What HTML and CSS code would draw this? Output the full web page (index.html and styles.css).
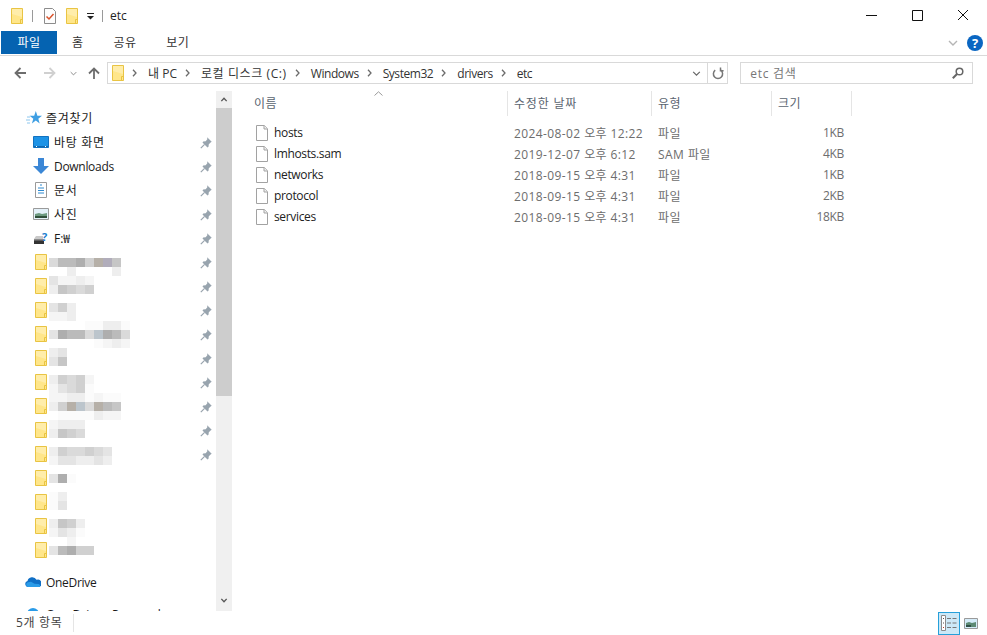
FILE: index.html
```html
<!DOCTYPE html>
<html lang="ko">
<head>
    <meta charset="UTF-8">
    <meta name="viewport" content="width=device-width, initial-scale=1.0">
    <title>etc</title>
    <link rel="stylesheet" href="styles.css">
</head>
<body>
    <svg class="defs" width="0" height="0">
        <symbol id="folder" viewBox="0 0 12 16">
            <path d="M.5.5h11v15H.5z" fill="#ffe68a" stroke="#e9c443"/>
            <path d="M1 1h10v8L1 6z" fill="#ffedaa"/>
            <path d="M9.5 15.5v-4h2" fill="none" stroke="#e9c443"/>
        </symbol>
        <symbol id="pin" viewBox="0 0 12 12">
            <path d="M7.2.3 11.700 4.800l-1.100.6-1.800 1.800-.3 2.600-1 .7L2.500 5.500l.7-1 2.500-.3 1.600-1.900z" fill="#98a4ae"/>
            <path d="M4.600 7.400 .8 11.200" stroke="#98a4ae" stroke-width="1.200" fill="none"/>
        </symbol>
        <symbol id="file" viewBox="0 0 12 16">
            <path d="M.5.5h7.800l3.200 3.200v11.800H.5z" fill="#fff" stroke="#a2a2a2"/>
            <path d="M8 .5v3.500h3.500" fill="#f0f0f0" stroke="#a2a2a2"/>
        </symbol>
        <symbol id="chev-down" viewBox="0 0 10 6">
            <path d="M1 1l4 4 4-4" fill="none" stroke="currentColor" stroke-width="1.400"/>
        </symbol>
        <symbol id="sep-arrow" viewBox="0 0 5 8">
            <path d="M1 .8 4 4 1 7.200" fill="none" stroke="#6b6b6b" stroke-width="1.300"/>
        </symbol>
    </svg>

    <header class="titlebar">
        <svg class="qa-icon"><use href="#folder"/></svg>
        <span class="qa-sep"></span>
        <svg class="qa-check" viewBox="0 0 12 16">
            <path d="M.5.5h8l3 3v12H.5z" fill="#fdfdfd" stroke="#8c8c8c"/>
            <path d="M2.500 8.500 5 11l4.500-5" fill="none" stroke="#d9532c" stroke-width="1.500"/>
        </svg>
        <svg class="qa-icon qa-second"><use href="#folder"/></svg>
        <svg class="qa-drop" viewBox="0 0 7 7">
            <path d="M0 .5h7" stroke="#222"/>
            <path d="M0 3h7L3.500 6.500z" fill="#222"/>
        </svg>
        <span class="qa-sep qa-sep-last"></span>
        <span class="title-text">etc</span>
        <div class="window-buttons">
            <svg class="win-btn" viewBox="0 0 46 16"><path d="M18 8.500h11" stroke="#111"/></svg>
            <svg class="win-btn" viewBox="0 0 46 16"><path d="M18.500 3.500h10v10h-10z" fill="none" stroke="#111"/></svg>
            <svg class="win-btn" viewBox="0 0 46 16"><path d="M18 3l10 10M28 3 18 13" fill="none" stroke="#111"/></svg>
        </div>
    </header>

    <nav class="ribbon">
        <span class="tab tab-file">파일</span>
        <span class="tab tab-home">홈</span>
        <span class="tab tab-share">공유</span>
        <span class="tab tab-view">보기</span>
        <svg class="ribbon-toggle"><use href="#chev-down"/></svg>
        <span class="help">?</span>
    </nav>

    <div class="address-row">
        <svg class="nav-arrow" viewBox="0 0 12 12"><path d="M12 6H2M6.500 1 1.500 6l5 5" fill="none" stroke="#6d6d6d" stroke-width="1.800"/></svg>
        <svg class="nav-arrow nav-forward" viewBox="0 0 12 12"><path d="M0 6h10M5.500 1l5 5-5 5" fill="none" stroke="#d0d0d0" stroke-width="1.800"/></svg>
        <svg class="recent"><use href="#chev-down"/></svg>
        <svg class="nav-arrow nav-up" viewBox="0 0 12 12"><path d="M6 12V2M1 6.500l5-5 5 5" fill="none" stroke="#6d6d6d" stroke-width="1.800"/></svg>
        <div class="address-box">
            <svg class="crumb-folder"><use href="#folder"/></svg>
            <svg class="crumb-sep"><use href="#sep-arrow"/></svg>
            <span class="crumb">내 PC</span>
            <svg class="crumb-sep"><use href="#sep-arrow"/></svg>
            <span class="crumb crumb-ko">로컬 디스크 (C:)</span>
            <svg class="crumb-sep"><use href="#sep-arrow"/></svg>
            <span class="crumb crumb-lat">Windows</span>
            <svg class="crumb-sep"><use href="#sep-arrow"/></svg>
            <span class="crumb crumb-lat">System32</span>
            <svg class="crumb-sep"><use href="#sep-arrow"/></svg>
            <span class="crumb crumb-lat">drivers</span>
            <svg class="crumb-sep"><use href="#sep-arrow"/></svg>
            <span class="crumb crumb-lat">etc</span>
            <svg class="address-drop"><use href="#chev-down"/></svg>
            <span class="refresh">
                <svg viewBox="0 0 12 13" width="12" height="13"><path d="M8.800 3.200a4.600 4.600 0 1 1-5.600 0M3.500 .5v3.300H.4" fill="none" stroke="#777" stroke-width="1.500" transform="translate(12 0) scale(-1 1)"/></svg>
            </span>
        </div>
        <div class="search-box">
            <span class="ko">etc 검색</span>
            <svg class="search-icon" viewBox="0 0 12 12"><circle cx="7.500" cy="4.500" r="3.300" fill="none" stroke="#666" stroke-width="1.500"/><path d="M5 7 .8 11.200" stroke="#666" stroke-width="2"/></svg>
        </div>
    </div>

    <main class="body-row">
        <aside class="sidebar">
            <div class="tree">
                <div class="tree-row tree-root">
                    <svg class="tree-icon star-icon" viewBox="0 0 16 14"><path d="M9.800 0l1.600 4.700 4.600.1-3.700 2.900 1.400 4.700-3.900-2.800-3.900 2.800 1.400-4.700L3.600 4.800l4.600-.1z" fill="#3f9fe3"/><path d="M1 6h3M0 9h4M1 12h3" stroke="#8cc6ee"/></svg>
                    <span class="ko">즐겨찾기</span>
                </div>
                <div class="tree-row">
                    <svg class="tree-icon" viewBox="0 0 16 12"><path d="M.5.500h15v11H.5z" fill="#1d93e6" stroke="#1272c0"/><path d="M1 10.500h14" stroke="#0f68b0"/><path d="M3 10.500h1M12 10.500h1" stroke="#fff"/></svg>
                    <span class="ko">바탕 화면</span>
                    <svg class="pin"><use href="#pin"/></svg>
                </div>
                <div class="tree-row">
                    <svg class="tree-icon" viewBox="0 0 16 16"><path d="M5 0h6v8h5l-8 8-8-8h5z" fill="#3b87d6"/></svg>
                    <span class="lat">Downloads</span>
                    <svg class="pin"><use href="#pin"/></svg>
                </div>
                <div class="tree-row">
                    <svg class="tree-icon" viewBox="0 0 16 16"><path d="M2.500.5h11v15h-11z" fill="#fff" stroke="#9a9a9a"/><path d="M7 3h2M5 6h6M5 8.500h6M5 11h6" stroke="#2f8ad0"/></svg>
                    <span class="ko">문서</span>
                    <svg class="pin"><use href="#pin"/></svg>
                </div>
                <div class="tree-row">
                    <svg class="tree-icon" viewBox="0 0 16 12"><path d="M.5.500h15v11H.5z" fill="#e4f1f9" stroke="#9a9a9a"/><path d="M2 6l4-1 3 1 5-1v5H2z" fill="#6d9a80"/><path d="M2 8h12v2H2z" fill="#2f4f3a"/></svg>
                    <span class="ko">사진</span>
                    <svg class="pin"><use href="#pin"/></svg>
                </div>
                <div class="tree-row">
                    <svg class="tree-icon" viewBox="0 0 16 14"><path d="M1 8l2-3h7v3z" fill="#c9c9c9"/><path d="M1 8h10v5H1z" fill="#333"/><path d="M1 8h10v1.500H1z" fill="#8a8a8a"/><text x="9" y="10" class="drive-mark">?</text></svg>
                    <span>F:₩</span>
                    <svg class="pin"><use href="#pin"/></svg>
                </div>

                <div class="tree-row">
                    <svg class="tree-folder"><use href="#folder"/></svg>
                    <svg class="pin"><use href="#pin"/></svg>
                    <div class="blur off-8">
                        <div class="blur-line"><i class="g4"></i><i class="g7"></i><i class="g7"></i><i class="g8"></i><i class="g5"></i><i class="t1"></i><i class="t3"></i><i class="g6"></i></div>
                        <div class="blur-line"><i></i><i></i><i class="g2"></i><i></i><i></i><i></i><i></i><i class="g2"></i></div>
                    </div>
                </div>
                <div class="tree-row">
                    <svg class="tree-folder"><use href="#folder"/></svg>
                    <svg class="pin"><use href="#pin"/></svg>
                    <div class="blur off-2">
                        <div class="blur-line"><i class="g3"></i><i class="g1"></i><i class="g1"></i><i class="g2"></i><i class="g1"></i></div>
                        <div class="blur-line"><i class="g2"></i><i class="g6"></i><i class="g5"></i><i class="g4"></i><i class="g5"></i></div>
                    </div>
                </div>
                <div class="tree-row">
                    <svg class="tree-folder"><use href="#folder"/></svg>
                    <svg class="pin"><use href="#pin"/></svg>
                    <div class="blur off-5">
                        <div class="blur-line"><i class="g3"></i><i class="g5"></i><i class="g2"></i></div>
                        <div class="blur-line"><i class="g1"></i><i class="g1"></i><i class="g2"></i></div>
                    </div>
                </div>
                <div class="tree-row">
                    <svg class="tree-folder"><use href="#folder"/></svg>
                    <svg class="pin"><use href="#pin"/></svg>
                    <div class="blur off-m1">
                        <div class="blur-line"><i></i><i></i><i></i><i></i><i class="g0"></i><i class="g0"></i><i class="g2"></i><i class="g2"></i><i class="g0"></i></div>
                        <div class="blur-line"><i class="g3"></i><i class="g8"></i><i class="g7"></i><i class="g7"></i><i class="g4"></i><i class="t2"></i><i class="g8"></i><i class="g7"></i><i class="g4"></i></div>
                        <div class="blur-line"><i></i><i></i><i></i><i></i><i></i><i class="g0"></i><i class="g1"></i><i class="g2"></i><i class="g1"></i></div>
                    </div>
                </div>
                <div class="tree-row">
                    <svg class="tree-folder"><use href="#folder"/></svg>
                    <svg class="pin"><use href="#pin"/></svg>
                    <div class="blur off-2">
                        <div class="blur-line"><i class="g2"></i><i class="g3"></i></div>
                        <div class="blur-line"><i class="g3"></i><i class="g6"></i></div>
                    </div>
                </div>
                <div class="tree-row">
                    <svg class="tree-folder"><use href="#folder"/></svg>
                    <svg class="pin"><use href="#pin"/></svg>
                    <div class="blur off-5">
                        <div class="blur-line"><i class="g2"></i><i class="g5"></i><i class="g4"></i><i class="g5"></i><i class="g1"></i></div>
                        <div class="blur-line"><i class="g1"></i><i class="g3"></i><i class="g4"></i><i class="g5"></i><i class="g0"></i></div>
                    </div>
                </div>
                <div class="tree-row">
                    <svg class="tree-folder"><use href="#folder"/></svg>
                    <svg class="pin"><use href="#pin"/></svg>
                    <div class="blur off-m1">
                        <div class="blur-line"><i class="g1"></i><i class="g1"></i><i class="g2"></i><i class="g2"></i><i class="g0"></i><i class="g1"></i><i class="g0"></i><i class="g0"></i></div>
                        <div class="blur-line"><i class="g2"></i><i class="g5"></i><i class="t1"></i><i class="t2"></i><i class="g4"></i><i class="t1"></i><i class="g7"></i><i class="g6"></i></div>
                        <div class="blur-line"><i></i><i class="g0"></i><i class="g0"></i><i class="g0"></i><i class="g0"></i><i class="g2"></i><i class="g1"></i><i class="g1"></i></div>
                    </div>
                </div>
                <div class="tree-row">
                    <svg class="tree-folder"><use href="#folder"/></svg>
                    <svg class="pin"><use href="#pin"/></svg>
                    <div class="blur off-2">
                        <div class="blur-line"><i class="g1"></i><i class="g2"></i><i class="g2"></i><i class="g2"></i></div>
                        <div class="blur-line"><i class="g2"></i><i class="g6"></i><i class="g5"></i><i class="g4"></i></div>
                    </div>
                </div>
                <div class="tree-row">
                    <svg class="tree-folder"><use href="#folder"/></svg>
                    <svg class="pin"><use href="#pin"/></svg>
                    <div class="blur off-5">
                        <div class="blur-line"><i class="g2"></i><i class="g5"></i><i class="g4"></i><i class="g4"></i><i class="g5"></i><i class="g4"></i><i class="g3"></i></div>
                        <div class="blur-line"><i class="g1"></i><i class="g3"></i><i class="g3"></i><i class="g2"></i><i class="g2"></i><i class="g3"></i><i class="g2"></i></div>
                    </div>
                </div>
                <div class="tree-row">
                    <svg class="tree-folder"><use href="#folder"/></svg>
                    <div class="blur off-8">
                        <div class="blur-line"><i class="g3"></i><i class="g8"></i><i class="g0"></i></div>
                    </div>
                </div>
                <div class="tree-row">
                    <svg class="tree-folder"><use href="#folder"/></svg>
                    <div class="blur off-2">
                        <div class="blur-line"><i class="g0"></i><i class="g2"></i></div>
                        <div class="blur-line"><i class="g0"></i><i class="g3"></i></div>
                    </div>
                </div>
                <div class="tree-row">
                    <svg class="tree-folder"><use href="#folder"/></svg>
                    <div class="blur off-5">
                        <div class="blur-line"><i class="g2"></i><i class="g6"></i><i class="g5"></i><i class="g2"></i></div>
                        <div class="blur-line"><i class="g1"></i><i class="g3"></i><i class="g2"></i><i class="g0"></i></div>
                    </div>
                </div>
                <div class="tree-row">
                    <svg class="tree-folder"><use href="#folder"/></svg>
                    <div class="blur off-m1">
                        <div class="blur-line"><i></i><i></i><i class="g1"></i></div>
                        <div class="blur-line"><i class="g3"></i><i class="g7"></i><i class="g8"></i><i class="g5"></i><i class="g5"></i></div>
                    </div>
                </div>

                <div class="tree-row tree-root tree-gap">
                    <svg class="tree-icon" viewBox="0 0 16 11"><path d="M3 10.500a3 3 0 0 1-.5-5.900 4.800 4.800 0 0 1 9-1.300 3.700 3.700 0 0 1 2.500 7.200z" fill="#0f6fc6"/><path d="M3 10.500a2.400 2.400 0 0 1 0-4.700l3-.6 3.500 2 4 .3c2 .5 2 3 .5 3z" fill="#2a9be8"/></svg>
                    <span class="lat">OneDrive</span>
                </div>
                <div class="tree-row tree-root tree-gap">
                    <svg class="tree-icon" viewBox="0 0 16 16"><circle cx="8" cy="8" r="6" fill="#2a9be8"/></svg>
                    <span>One Drive - Personal</span>
                </div>
            </div>
            <div class="scrollbar">
                <svg class="scroll-btn" viewBox="0 0 8 6"><path d="M.8 5 4 1.500 7.200 5" fill="none" stroke="#555" stroke-width="1.600"/></svg>
                <div class="scroll-thumb"></div>
                <svg class="scroll-btn scroll-end" viewBox="0 0 8 6"><path d="M.8 1 4 4.500 7.200 1" fill="none" stroke="#555" stroke-width="1.600"/></svg>
            </div>
        </aside>

        <section class="files">
            <div class="file-head">
                <span class="col-name head-name">이름
                    <svg class="sort" viewBox="0 0 9 5"><path d="M.5 4.500 4.500 .8l4 3.700" fill="none" stroke="#9a9a9a"/></svg>
                </span>
                <span class="col-date head-cell ko">수정한 날짜</span>
                <span class="col-type head-cell">유형</span>
                <span class="col-size head-cell">크기</span>
            </div>
            <div class="file-list">
                <div class="file-row">
                    <span class="col-name file-name"><svg class="file-icon"><use href="#file"/></svg>hosts</span>
                    <span class="col-date file-meta">2024-08-02 오후 12:22</span>
                    <span class="col-type file-meta">파일</span>
                    <span class="col-size file-meta size">1KB</span>
                </div>
                <div class="file-row">
                    <span class="col-name file-name"><svg class="file-icon"><use href="#file"/></svg>lmhosts.sam</span>
                    <span class="col-date file-meta">2019-12-07 오후 6:12</span>
                    <span class="col-type file-meta">SAM 파일</span>
                    <span class="col-size file-meta size">4KB</span>
                </div>
                <div class="file-row">
                    <span class="col-name file-name"><svg class="file-icon"><use href="#file"/></svg>networks</span>
                    <span class="col-date file-meta">2018-09-15 오후 4:31</span>
                    <span class="col-type file-meta">파일</span>
                    <span class="col-size file-meta size">1KB</span>
                </div>
                <div class="file-row">
                    <span class="col-name file-name"><svg class="file-icon"><use href="#file"/></svg>protocol</span>
                    <span class="col-date file-meta">2018-09-15 오후 4:31</span>
                    <span class="col-type file-meta">파일</span>
                    <span class="col-size file-meta size">2KB</span>
                </div>
                <div class="file-row">
                    <span class="col-name file-name"><svg class="file-icon"><use href="#file"/></svg>services</span>
                    <span class="col-date file-meta">2018-09-15 오후 4:31</span>
                    <span class="col-type file-meta">파일</span>
                    <span class="col-size file-meta size">18KB</span>
                </div>
            </div>
        </section>
    </main>

    <footer class="statusbar">
        <span class="item-count ko">5개 항목</span>
        <div class="view-buttons">
            <span class="view-details">
                <svg viewBox="0 0 16 16" width="16" height="16">
                    <path d="M.5.500h4v15h-4z" fill="#fff" stroke="#8a8a8a"/>
                    <path d="M2 3h1v1H2zM2 7.500h1v1H2z" fill="#555"/>
                    <path d="M2 12h1v1H2z" fill="#c0392b"/>
                    <path d="M6 3.500h4M11.500 3.500h4M6 8h4M11.500 8h4M6 12.500h4M11.500 12.500h4" stroke="#777"/>
                </svg>
            </span>
            <svg class="view-large" viewBox="0 0 14 11"><path d="M.5.500h13v10H.5z" fill="#d5ecf9" stroke="#9a9a9a"/><path d="M2 5l3-1 3 1 4-1v5H2z" fill="#5d8a74"/><path d="M2 7h5v2H2z" fill="#2f4f46"/></svg>
        </div>
    </footer>
</body>
</html>
```

FILE: styles.css
```css
* {
    box-sizing: border-box;
}
body {
    margin: 0;
    width: 987px;
    height: 635px;
    overflow: hidden;
    display: flex;
    flex-direction: column;
    background-color: white;
    font-family: "Open Sans", "Noto Sans CJK KR", sans-serif;
    font-size: 12px;
    color: #1a1a1a;
}
svg {
    display: block;
    flex-shrink: 0;
}
.defs {
    position: absolute;
}
/* hangul runs a bit wider and latin a bit narrower than the fonts we have */
.ko {
    letter-spacing: .7px;
}
.lat {
    letter-spacing: -.3px;
}

/* title bar */
.titlebar {
    height: 31px;
    display: flex;
    align-items: center;
    padding-left: 11px;
}
.qa-icon {
    width: 12px;
    height: 16px;
}
.qa-sep {
    width: 1px;
    height: 12px;
    margin: 0 11px 0 9px;
    background-color: #9a9a9a;
}
.qa-check {
    width: 12px;
    height: 16px;
}
.qa-second {
    margin-left: 10px;
}
.qa-drop {
    width: 7px;
    height: 7px;
    margin: 2px 0 0 9px;
}
.qa-sep-last {
    margin: 0 7px 0 8px;
}
.title-text {
    font-size: 12px;
    color: #222;
}
.window-buttons {
    margin-left: auto;
    display: flex;
    padding-right: 1px;
}
.win-btn {
    width: 46px;
    height: 16px;
    margin-top: -1px;
}

/* ribbon tabs */
.ribbon {
    height: 25px;
    display: flex;
    align-items: flex-start;
    padding-left: 1px;
    border-bottom: 1px solid #d9d9d9;
    position: relative;
}
.tab {
    height: 23px;
    line-height: 23px;
    color: #333;
    letter-spacing: .4px;
}
.tab-file {
    width: 56px;
    text-align: center;
    background-color: #0563b1;
    color: white;
}
.tab-home {
    margin-left: 15px;
}
.tab-share {
    margin-left: 30px;
}
.tab-view {
    margin-left: 30px;
}
.ribbon-toggle {
    width: 10px;
    height: 6px;
    margin: 9px 0 0 auto;
    color: #b5b5b5;
}
.help {
    width: 16px;
    height: 16px;
    margin: 4px 4px 0 9px;
    border-radius: 50%;
    background-color: #0a66c2;
    color: white;
    font-weight: 700;
    font-size: 13px;
    line-height: 16px;
    text-align: center;
}

/* address row */
.address-row {
    height: 35px;
    padding: 6px 14px 7px 14px;
    display: flex;
    align-items: stretch;
}
.nav-arrow {
    width: 12px;
    height: 12px;
    margin-top: 5px;
}
.nav-forward {
    margin-left: 18px;
}
.recent {
    width: 7px;
    height: 5px;
    margin: 9px 0 0 14px;
    color: #8a8a8a;
}
.nav-up {
    margin-left: 11px;
}
.address-box {
    width: 622px;
    margin-left: 7px;
    border: 1px solid #d9d9d9;
    display: flex;
    align-items: center;
    padding-left: 4px;
    color: #333;
}
.crumb-folder {
    width: 12px;
    height: 16px;
}
.crumb-sep {
    width: 5px;
    height: 8px;
    margin: 0 11px 0 8px;
}
.crumb-ko {
    letter-spacing: .6px;
}
.crumb-lat {
    letter-spacing: -.45px;
}
.address-drop {
    width: 9px;
    height: 5px;
    margin-left: auto;
    color: #666;
}
.refresh {
    width: 20px;
    height: 100%;
    margin-left: 6px;
    border-left: 1px solid #d9d9d9;
    display: flex;
    align-items: center;
    justify-content: center;
}
.search-box {
    width: 233px;
    margin-left: 12px;
    border: 1px solid #d9d9d9;
    display: flex;
    align-items: center;
    justify-content: space-between;
    padding: 0 8px 0 9px;
    color: #777;
}
.search-icon {
    width: 12px;
    height: 12px;
}

/* sidebar */
.body-row {
    flex: 1;
    display: flex;
    min-height: 0;
}
.sidebar {
    width: 232px;
    display: flex;
    overflow: hidden;
}
.tree {
    width: 216px;
    padding-top: 15px;
    overflow: hidden;
}
.tree-row {
    height: 24px;
    display: flex;
    align-items: center;
    gap: 5px;
    padding: 0 4px 0 33px;
    position: relative;
}
.tree-root {
    padding-left: 25px;
}
.tree-gap {
    margin-top: 8px;
}
.tree-icon {
    width: 16px;
    height: 16px;
}
.star-icon {
    margin-left: 1px;
    margin-right: -1px;
}
.tree-folder {
    width: 12px;
    height: 16px;
    margin-left: 2px;
}
.drive-mark {
    font-size: 11px;
    font-weight: 700;
    fill: #1d7fd0;
}
.pin {
    width: 12px;
    height: 12px;
    margin: 2px 0 0 auto;
}

/* mosaic over the censored folder names */
.blur {
    position: absolute;
    left: 49px;
}
.off-8 {
    top: 8px;
}
.off-5 {
    top: 5px;
}
.off-2 {
    top: 2px;
}
.off-m1 {
    top: -1px;
}
.blur-line {
    display: flex;
}
.blur-line i {
    width: 9px;
    height: 9px;
}
.g0 { background-color: #fbfbfb; }
.g1 { background-color: #f5f5f5; }
.g2 { background-color: #eeeeee; }
.g3 { background-color: #e4e4e4; }
.g4 { background-color: #dadada; }
.g5 { background-color: #d0d0d0; }
.g6 { background-color: #c6c6c6; }
.g7 { background-color: #bbbbbb; }
.g8 { background-color: #aeaeae; }
.t1 { background-color: #b6b0a8; }
.t2 { background-color: #bcc5cc; }
.t3 { background-color: #b1adbb; }

.scrollbar {
    width: 16px;
    background-color: #f0f0f0;
    display: flex;
    flex-direction: column;
}
.scroll-btn {
    width: 16px;
    height: 17px;
    padding: 6px 4px;
}
.scroll-thumb {
    height: 288px;
    background-color: #cdcdcd;
}
.scroll-end {
    margin-top: auto;
    margin-bottom: 2px;
}

/* file list */
.files {
    flex: 1;
}
.file-head {
    height: 25px;
    display: flex;
    color: #5a6470;
    padding-left: 22px;
}
.col-name {
    width: 253px;
}
.col-date {
    width: 144px;
}
.col-type {
    width: 120px;
}
.col-size {
    width: 80px;
}
.head-name {
    line-height: 26px;
    position: relative;
    letter-spacing: .4px;
}
.head-cell {
    line-height: 26px;
    padding-left: 6px;
    border-right: 1px solid #e5e5e5;
    letter-spacing: .4px;
}
.col-date.head-cell {
    border-left: 1px solid #e5e5e5;
    width: 145px;
    letter-spacing: .8px;
}
.sort {
    position: absolute;
    left: 120px;
    top: 0;
    width: 9px;
    height: 5px;
}
.file-list {
    padding: 6px 0 0 24px;
}
.file-row {
    height: 21px;
    display: flex;
    align-items: center;
}
.file-row .col-name {
    width: 258px;
}
.file-row .col-date {
    width: 144px;
    letter-spacing: .4px;
}
.file-row .col-type {
    width: 114px;
    letter-spacing: .45px;
}
.file-row .col-size {
    width: 72px;
    letter-spacing: -.3px;
}
.file-name {
    display: flex;
    align-items: center;
    gap: 6px;
    color: #222;
    letter-spacing: -.35px;
}
.file-icon {
    width: 12px;
    height: 16px;
}
.file-meta {
    color: #6d6d6d;
}
.size {
    text-align: right;
}

/* status bar */
.statusbar {
    height: 24px;
    display: flex;
    align-items: center;
    padding-left: 16px;
    color: #444;
}
.item-count {
    padding-right: 10px;
    border-right: 1px solid #e5e5e5;
    line-height: 18px;
}
.view-buttons {
    margin-left: auto;
    display: flex;
    align-items: center;
    padding-right: 9px;
}
.view-details {
    width: 22px;
    height: 23px;
    border: 1px solid #26a0da;
    background-color: #cce8f7;
    display: flex;
    align-items: center;
    justify-content: center;
}
.view-large {
    width: 14px;
    height: 11px;
    margin-left: 4px;
}
```
